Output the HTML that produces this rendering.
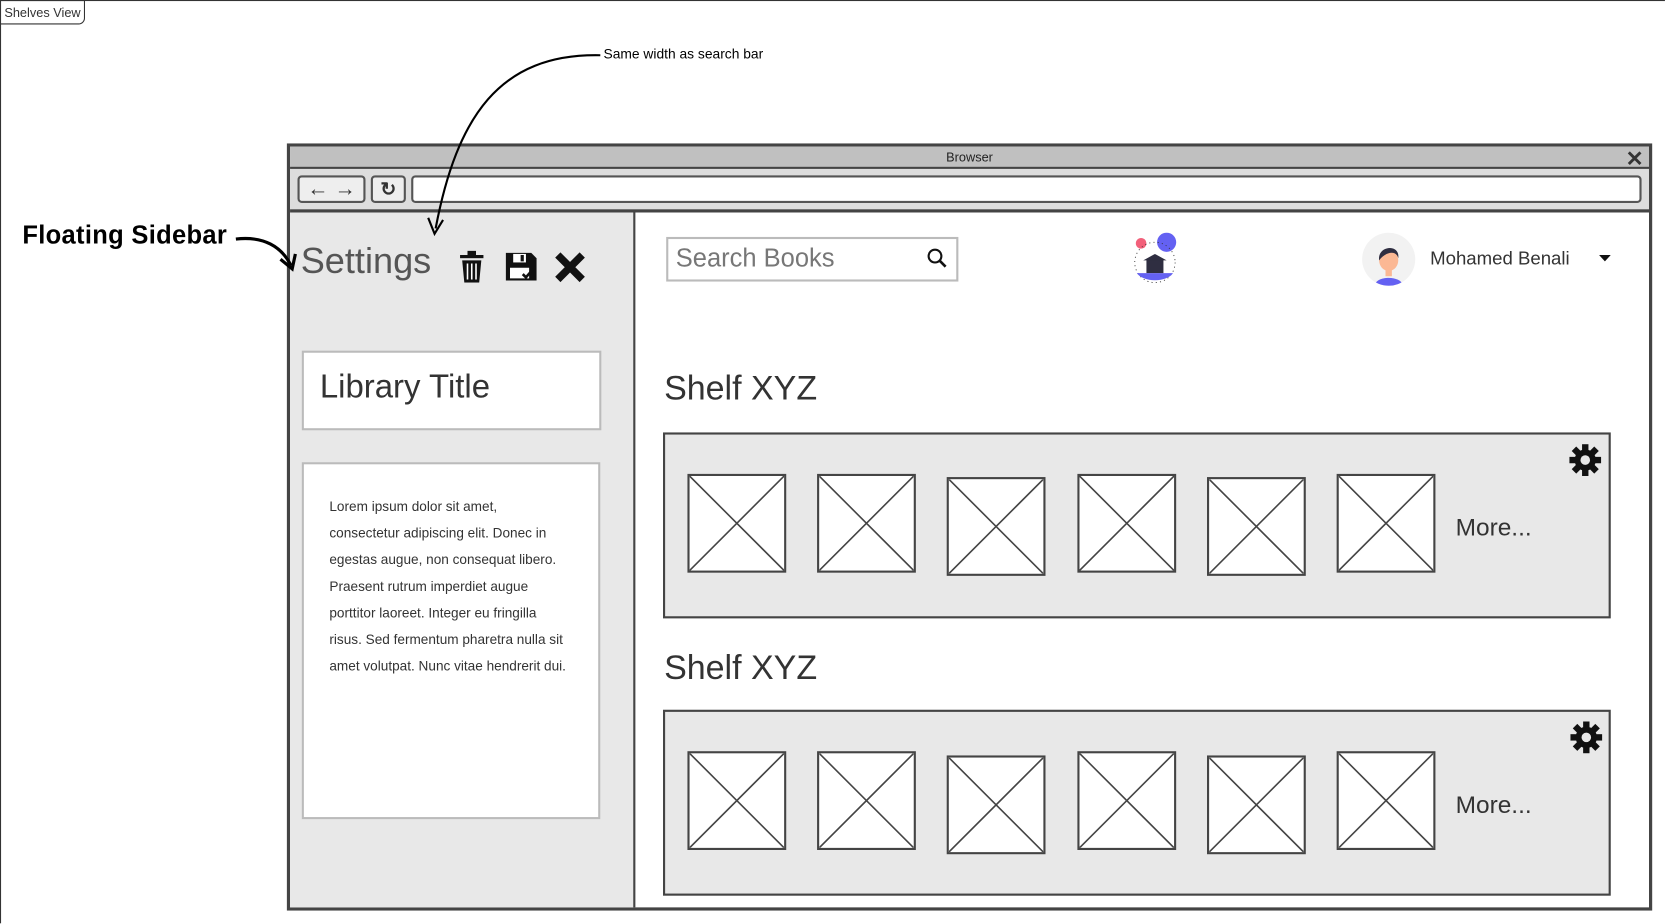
<!DOCTYPE html>
<html><head><meta charset="utf-8"><style>
html,body{margin:0;padding:0;background:#fff;overflow:hidden}
#w{position:absolute;left:0;top:0;width:1568px;height:870px;transform:scale(1.0625);transform-origin:0 0;font-family:"Comic Sans MS","Liberation Sans",sans-serif;color:#333}
.a{position:absolute}
.thumb{position:absolute;width:93px;height:93px;border:2px solid #444;background:#fff;box-sizing:border-box;overflow:hidden}
.thumb svg{position:absolute;left:0;top:0}
</style></head><body><div id="w">
<div class="a" style="left:0;top:0;width:1566px;height:868px;border-left:1px solid #333;border-top:1px solid #333"></div>
<div class="a" style="left:0;top:0;width:78px;height:21px;border:1px solid #333;border-radius:0 0 6px 0;background:#fff;font:12px 'Liberation Sans',sans-serif;line-height:22px;text-align:center">Shelves View</div>

<div class="a" style="left:568px;top:43px;font-size:13px;color:#000">Same width as search bar</div>
<div class="a" style="left:21px;top:208px;font-size:24px;font-weight:bold;color:#000;letter-spacing:0.3px">Floating Sidebar</div>

<!-- browser -->
<div class="a" style="left:270px;top:135px;width:1285px;height:722px;border:3px solid #444;box-sizing:border-box;background:#fff"></div>
<div class="a" style="left:273px;top:138px;width:1279px;height:19px;background:#c0c0c0;border-bottom:2px solid #444;font-size:12px;text-align:center;line-height:20px;color:#222">Browser</div>
<div class="a" style="left:1530px;top:137px;font:bold 20px 'Liberation Sans',sans-serif;color:#333">✕</div>
<div class="a" style="left:273px;top:159px;width:1279px;height:38px;background:#ddd;border-bottom:3px solid #444"></div>
<div class="a" style="left:280px;top:165px;width:64px;height:26px;border:2px solid #555;border-radius:4px;background:#eee;box-sizing:border-box;font:20px 'Liberation Sans',sans-serif;line-height:22px;text-align:center">← →</div>
<div class="a" style="left:349px;top:165px;width:33px;height:26px;border:2px solid #555;border-radius:4px;background:#eee;box-sizing:border-box;font:bold 18px 'Liberation Sans',sans-serif;line-height:22px;text-align:center">↻</div>
<div class="a" style="left:387px;top:165px;width:1158px;height:26px;border:2px solid #555;border-radius:4px;background:#fff;box-sizing:border-box"></div>

<!-- sidebar -->
<div class="a" style="left:273px;top:200px;width:323px;height:654px;background:#e8e8e8;border-right:2px solid #444"></div>
<div class="a" style="left:283px;top:227px;font-size:34px;color:#555">Settings</div>
<svg class="a" style="left:432px;top:236px" width="24" height="30" viewBox="0 0 24 30"><rect x="1" y="4" width="22" height="3" fill="#111"/><rect x="8" y="0" width="8" height="4" fill="#111"/><path d="M3 9H21L19 30H5Z" fill="#111"/><path d="M8 12V27M12 12V27M16 12V27" stroke="#fff" stroke-width="1.5"/></svg>
<svg class="a" style="left:476px;top:236px" width="30" height="30" viewBox="0 0 30 30"><path d="M0 2H24L29 7V28H0Z" fill="#111"/><rect x="7" y="3" width="12" height="8" fill="#fff"/><rect x="14" y="4" width="3" height="6" fill="#111"/><rect x="4" y="16" width="18" height="10" fill="#fff"/><path d="M16 22l3 3 7-8" stroke="#111" stroke-width="2.5" fill="none"/></svg>
<svg class="a" style="left:521px;top:236px" width="31" height="31"><path d="M4 4L27 27M27 4L4 27" stroke="#111" stroke-width="7"/></svg>
<div class="a" style="left:284px;top:330px;width:282px;height:75px;background:#fff;border:2px solid #bbb;box-sizing:border-box"></div>
<div class="a" style="left:301px;top:346px;font-size:31px;color:#333">Library Title</div>
<div class="a" style="left:284px;top:435px;width:281px;height:336px;background:#fff;border:2px solid #bbb;box-sizing:border-box"></div>
<div class="a" style="left:310px;top:464px;white-space:nowrap;font-size:12.8px;line-height:25px;color:#333">Lorem ipsum dolor sit amet,<br>consectetur adipiscing elit. Donec in<br>egestas augue, non consequat libero.<br>Praesent rutrum imperdiet augue<br>porttitor laoreet. Integer eu fringilla<br>risus. Sed fermentum pharetra nulla sit<br>amet volutpat. Nunc vitae hendrerit dui.</div>

<!-- header -->
<div class="a" style="left:627px;top:223px;width:275px;height:42px;border:2px solid #bbb;box-sizing:border-box;background:#fff"></div>
<div class="a" style="left:636px;top:230px;font-size:24px;color:#777">Search Books</div>
<svg class="a" style="left:872px;top:233px" width="20" height="20"><circle cx="8" cy="8" r="6" stroke="#111" stroke-width="2" fill="none"/><path d="M12.5 12.5L18 18" stroke="#111" stroke-width="2.5"/></svg>
<svg class="a" style="left:1062px;top:215px" width="50" height="58"><circle cx="12" cy="14" r="5" fill="#f2607a"/><circle cx="36" cy="13" r="9" fill="#6461f2"/><circle cx="25" cy="32" r="19" fill="none" stroke="#333" stroke-width="0.8" stroke-dasharray="1 3"/><path d="M8 42a18 10 0 0 0 34 0Z" fill="#6461f2"/><rect x="17" y="29" width="16" height="13" fill="#2f2e41"/><path d="M14 30L25 24L36 30Z" fill="#2f2e41"/></svg>
<div class="a" style="left:1282px;top:219px;width:50px;height:50px;border-radius:50%;background:#f2f2f2;overflow:hidden">
<svg width="50" height="50"><ellipse cx="25" cy="26" rx="9" ry="10" fill="#fbb894"/><path d="M16 26C14 12,36 10,34 24C32 16,22 18,16 26Z" fill="#2f2e41"/><path d="M12 50C12 40,38 40,38 50Z" fill="#6461f2"/><rect x="22" y="34" width="6" height="7" fill="#fbb894"/></svg></div>
<div class="a" style="left:1346px;top:233px;font-size:17.5px;color:#333">Mohamed Benali</div>
<svg class="a" style="left:1505px;top:240px" width="12" height="8"><path d="M0 0H11L5.5 6Z" fill="#111"/></svg>

<!-- shelves -->
<div class="a" style="left:625px;top:347px;font-size:32px;color:#333">Shelf XYZ</div>
<div class="a" style="left:625px;top:610px;font-size:32px;color:#333">Shelf XYZ</div>
<div class="a" style="left:624px;top:407px;width:892px;height:175px;background:#e8e8e8;border:2px solid #444;box-sizing:border-box"></div>
<div class="a" style="left:624px;top:668px;width:892px;height:175px;background:#e8e8e8;border:2px solid #444;box-sizing:border-box"></div>
<div class="a" style="left:1370px;top:483px;font-size:23px;color:#333">More...</div>
<div class="a" style="left:1370px;top:744px;font-size:23px;color:#333">More...</div>
<svg class="a" style="left:1477px;top:418px" width="30" height="30" viewBox="-15 -15 30 30"><g fill="#111"><circle r="10"/><rect x="-3" y="-15" width="6" height="30"/><rect x="-15" y="-3" width="30" height="6"/><g transform="rotate(45)"><rect x="-3" y="-15" width="6" height="30"/><rect x="-15" y="-3" width="30" height="6"/></g></g><circle r="4.5" fill="#e8e8e8"/></svg>
<svg class="a" style="left:1478px;top:679px" width="30" height="30" viewBox="-15 -15 30 30"><g fill="#111"><circle r="10"/><rect x="-3" y="-15" width="6" height="30"/><rect x="-15" y="-3" width="30" height="6"/><g transform="rotate(45)"><rect x="-3" y="-15" width="6" height="30"/><rect x="-15" y="-3" width="30" height="6"/></g></g><circle r="4.5" fill="#e8e8e8"/></svg>

<div id="th"></div>

<svg class="a" style="left:0;top:0" width="1568" height="870">
<path d="M565 52 C470 50,430 110,410 215" fill="none" stroke="#000" stroke-width="2"/>
<path d="M403 205 L409 220 L417 207" fill="none" stroke="#000" stroke-width="2"/>
<path d="M222 225 C248 222,265 232,274 250" fill="none" stroke="#000" stroke-width="3"/>
<path d="M264 244 L275 253 L278 239" fill="none" stroke="#000" stroke-width="3"/>
</svg>
<script>
var xs=[647,769,891,1014,1136,1258],ys1=[446,446,449,446,449,446],ys2=[707,707,711,707,711,707],h='';
function t(x,y){return '<div class="thumb" style="left:'+x+'px;top:'+y+'px"><svg width="89" height="89"><path d="M0 0L89 89M89 0L0 89" stroke="#444" stroke-width="1.5"/></svg></div>';}
for(var i=0;i<6;i++){h+=t(xs[i],ys1[i])+t(xs[i],ys2[i]);}
document.getElementById('th').innerHTML=h;
</script>
</div></body></html>
